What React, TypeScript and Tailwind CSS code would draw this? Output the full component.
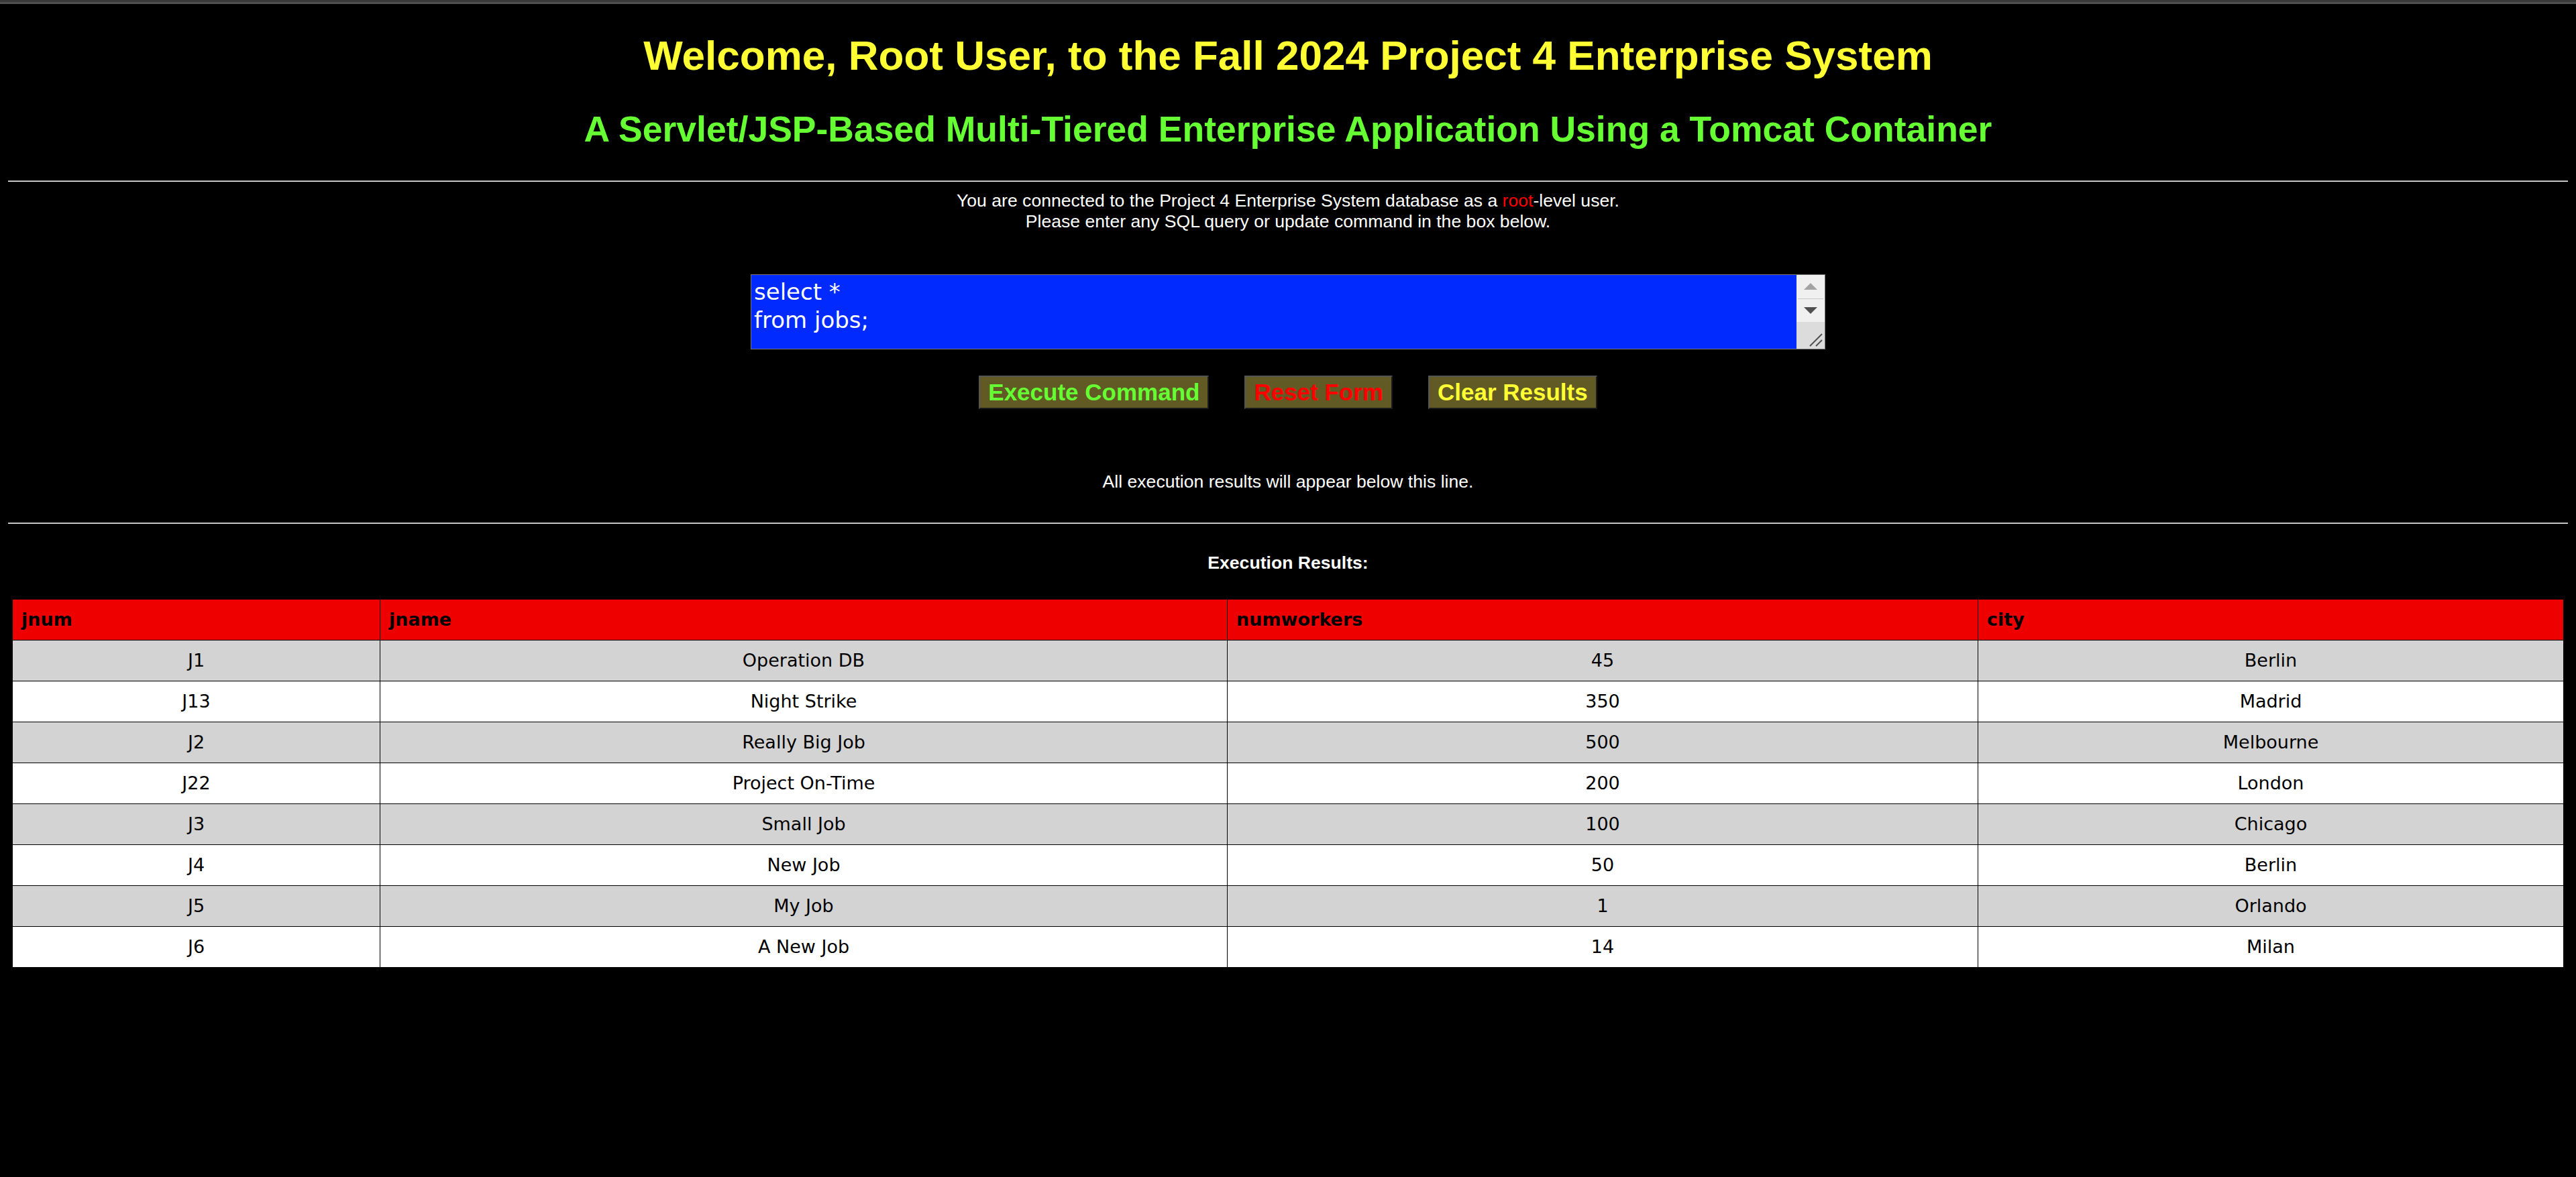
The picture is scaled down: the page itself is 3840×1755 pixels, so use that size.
import React from "react";

const jobs = [
  { jnum: "J1", jname: "Operation DB", numworkers: "45", city: "Berlin" },
  { jnum: "J13", jname: "Night Strike", numworkers: "350", city: "Madrid" },
  { jnum: "J2", jname: "Really Big Job", numworkers: "500", city: "Melbourne" },
  { jnum: "J22", jname: "Project On-Time", numworkers: "200", city: "London" },
  { jnum: "J3", jname: "Small Job", numworkers: "100", city: "Chicago" },
  { jnum: "J4", jname: "New Job", numworkers: "50", city: "Berlin" },
  { jnum: "J5", jname: "My Job", numworkers: "1", city: "Orlando" },
  { jnum: "J6", jname: "A New Job", numworkers: "14", city: "Milan" },
];

const Rule = () => (
  <div className="mx-[12px] border-t border-t-[#9a9a9a] border-b border-b-[#eeeeee]" />
);

const FakeScrollbar = () => (
  <div className="w-[42px] flex flex-col bg-[#dcdcdc]">
    <div className="h-[35px] bg-[#f0f0f0] flex items-center justify-center">
      <svg width="20" height="10" viewBox="0 0 20 10">
        <polygon points="10,0 20,10 0,10" fill="#a3a3a3" />
      </svg>
    </div>
    <div className="bg-[#f0f0f0] px-[2px]">
      <div className="h-px bg-[#c8c8c8]" />
    </div>
    <div className="h-[34px] bg-[#f0f0f0] flex items-center justify-center">
      <svg width="20" height="10" viewBox="0 0 20 10">
        <polygon points="0,0 20,0 10,10" fill="#505050" />
      </svg>
    </div>
    <div className="flex-1 flex items-end justify-end pr-[2px] pb-[2px]">
      <svg width="22" height="22" viewBox="0 0 22 22">
        <line x1="2" y1="20" x2="20" y2="2" stroke="#505050" strokeWidth="2" />
        <line x1="11" y1="20" x2="20" y2="11" stroke="#505050" strokeWidth="2" />
      </svg>
    </div>
  </div>
);

const btn =
  "h-[50px] px-[12px] bg-[#625a24] border-2 border-t-[#555555] border-l-[#555555] border-r-[#1a1a1a] border-b-[#1a1a1a] text-[35px] leading-none font-bold";

const App = () => {
  return (
    <div className="min-h-screen bg-black font-['Liberation_Sans',Arial,sans-serif] text-white">
      <div className="h-[3px] bg-[#3a3a3a]" />
      <div className="h-[3px] bg-[#505050]" />

      <h1 className="mt-[41px] text-center text-[62px] leading-[1.15] font-bold text-[#ffff33]">
        Welcome, Root User, to the Fall 2024 Project 4 Enterprise System
      </h1>
      <h2 className="mt-[44px] text-center text-[53.5px] leading-[1.15] font-bold text-[#66ff33]">
        A Servlet/JSP-Based Multi-Tiered Enterprise Application Using a Tomcat Container
      </h2>

      <div className="mt-[45px]">
        <Rule />
      </div>

      <div className="mt-[13px] text-center text-[26.6px] leading-[31px]">
        <p>
          You are connected to the Project 4 Enterprise System database as a{" "}
          <span className="text-[#ff0000]">root</span>-level user.
        </p>
        <p>Please enter any SQL query or update command in the box below.</p>
      </div>

      <form className="flex flex-col items-center">
        <div className="mt-[63px] w-[1602px] h-[112px] flex border border-[#767676] bg-[#002aff]">
          <div className="flex-1 pl-[4px] pt-[4px] font-['DejaVu_Sans',Verdana,sans-serif] text-[34px] leading-[42px] text-white">
            <div>select *</div>
            <div>from jobs;</div>
          </div>
          <FakeScrollbar />
        </div>

        <div className="mt-[39px] flex gap-[53px]">
          <button type="button" className={btn + " text-[#66ff33]"}>
            Execute Command
          </button>
          <button type="button" className={btn + " text-[#ff0000]"}>
            Reset Form
          </button>
          <button type="button" className={btn + " text-[#ffff33]"}>
            Clear Results
          </button>
        </div>
      </form>

      <p className="mt-[94px] text-center text-[26.6px] leading-[29px]">
        All execution results will appear below this line.
      </p>

      <div className="mt-[46px]">
        <Rule />
      </div>

      <p className="mt-[43px] text-center text-[26.6px] leading-[31px] font-bold">
        Execution Results:
      </p>

      <div className="mt-[38px] px-[18px]">
        <table className="w-full table-fixed border-collapse font-['DejaVu_Sans',Verdana,sans-serif] text-black">
          <colgroup>
            <col className="w-[548px]" />
            <col className="w-[1263px]" />
            <col className="w-[1119px]" />
            <col />
          </colgroup>
          <thead>
            <tr className="h-[61px] bg-[#ef0000]">
              {["jnum", "jname", "numworkers", "city"].map((h) => (
                <th
                  key={h}
                  className="border border-black pl-[13px] text-left text-[27px] font-bold align-middle"
                >
                  {h}
                </th>
              ))}
            </tr>
          </thead>
          <tbody>
            {jobs.map((job, i) => (
              <tr
                key={job.jnum}
                className={"h-[61px] " + (i % 2 === 0 ? "bg-[#d3d3d3]" : "bg-white")}
              >
                <td className="border border-black text-center text-[27px]">{job.jnum}</td>
                <td className="border border-black text-center text-[27px]">{job.jname}</td>
                <td className="border border-black text-center text-[27px]">{job.numworkers}</td>
                <td className="border border-black text-center text-[27px]">{job.city}</td>
              </tr>
            ))}
          </tbody>
        </table>
      </div>
    </div>
  );
};

export default App;
